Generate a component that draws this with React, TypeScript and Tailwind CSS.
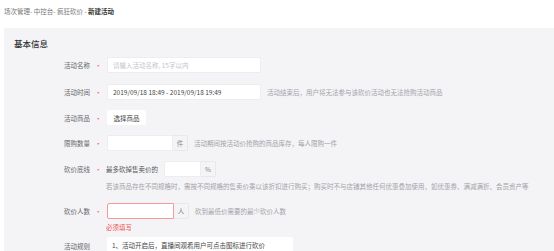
import React from 'react';

// --- small form pieces ---

const Label = ({ text, required = true }: { text: string; required?: boolean }) => (
  <div className="flex items-center shrink-0">
    <div className="w-[86px] text-right text-[#666]">{text}</div>
    <div className="w-[17px] pl-[5px] text-[#f0504f]">{required ? '•' : ''}</div>
  </div>
);

const Hint = ({ children, className = '' }: { children: React.ReactNode; className?: string }) => (
  <span className={`text-[#a3a3a8] ${className}`}>{children}</span>
);

const Addon = ({ unit }: { unit: string }) => (
  <div className="h-[16px] w-[15px] flex items-center justify-center bg-[#f4f4f7] border border-l-0 border-[#e8e8ec] text-[#888] rounded-r-[2px]">
    {unit}
  </div>
);

export default function App() {
  return (
    <div className="w-[554px] h-[251px] overflow-hidden bg-white text-[6.5px] leading-[10px] font-['Noto_Sans_CJK_SC',sans-serif]">
      {/* Breadcrumb */}
      <div className="pl-[4px] pt-[6px] h-[28px] text-[#777]">
        场次管理- 中控台- 疯狂砍价 - <span className="text-[#333] font-bold">新建活动</span>
      </div>

      {/* Card */}
      <div className="ml-[4px] bg-[#f4f4f7] h-full pt-[9px]">
        <div className="pl-[10px] text-[8.5px] leading-[12px] text-[#333] font-medium">基本信息</div>

        {/* 活动名称 */}
        <div className="flex items-center mt-[8px]">
          <Label text="活动名称" />
          <div className="w-[154px] h-[16px] bg-white rounded-[2px] border border-[#ededf0] flex items-center pl-[5px] text-[#c4c4c8]">
            请输入活动名称, 15字以内
          </div>
        </div>

        {/* 活动时间 */}
        <div className="flex items-center mt-[11px]">
          <Label text="活动时间" />
          <div className="w-[154px] h-[16px] bg-white rounded-[2px] border border-[#ededf0] flex items-center pl-[5px] text-[#444]">
            2019/09/18 18:49 - 2019/09/18 19:49
          </div>
          <Hint className="ml-[6px]">活动结束后，用户将无法参与该砍价活动也无法抢购活动商品</Hint>
        </div>

        {/* 活动商品 */}
        <div className="flex items-center mt-[10px]">
          <Label text="活动商品" />
          <div className="w-[39px] h-[15px] bg-white rounded-[2px] flex items-center justify-center text-[#444]">
            选择商品
          </div>
        </div>

        {/* 限购数量 */}
        <div className="flex items-center mt-[10px]">
          <Label text="限购数量" />
          <div className="w-[66px] h-[16px] bg-white rounded-l-[2px] border border-[#ededf0]" />
          <Addon unit="件" />
          <Hint className="ml-[6px]">活动期间按活动价抢购的商品库存，每人限购一件</Hint>
        </div>

        {/* 砍价底线 */}
        <div className="flex items-center mt-[10px]">
          <Label text="砍价底线" />
          <span className="text-[#555] -ml-[1px]">最多砍掉售卖价的</span>
          <div className="ml-[6px] w-[37px] h-[16px] bg-white rounded-l-[2px] border border-[#ededf0]" />
          <Addon unit="%" />
        </div>
        <div className="mt-[4px] pl-[102px]">
          <Hint>若该商品存在不同规格时，需按不同规格的售卖价乘以该折扣进行购买；购买时不与店铺其他任何优惠叠加使用，如优惠券、满减满折、会员资产等</Hint>
        </div>

        {/* 砍价人数 */}
        <div className="flex items-center mt-[12px]">
          <Label text="砍价人数" />
          <div className="w-[67px] h-[16px] bg-white rounded-l-[2px] border border-[#f59a9a]" />
          <Addon unit="人" />
          <Hint className="ml-[6px]">砍到最低价需要的最少砍价人数</Hint>
        </div>
        <div className="mt-[3px] pl-[102px] text-[#f0504f]">必须填写</div>

        {/* 活动规则 */}
        <div className="flex items-start mt-[5px]">
          <div className="flex items-center h-[16px] mt-[1px]">
            <Label text="活动规则" required={false} />
          </div>
          <div className="w-[186px] h-[30px] bg-white rounded-[2px] pl-[5px] pt-[3px] text-[#444]">
            1、活动开启后，直播间观看用户可点击图标进行砍价
          </div>
        </div>
      </div>
    </div>
  );
}
